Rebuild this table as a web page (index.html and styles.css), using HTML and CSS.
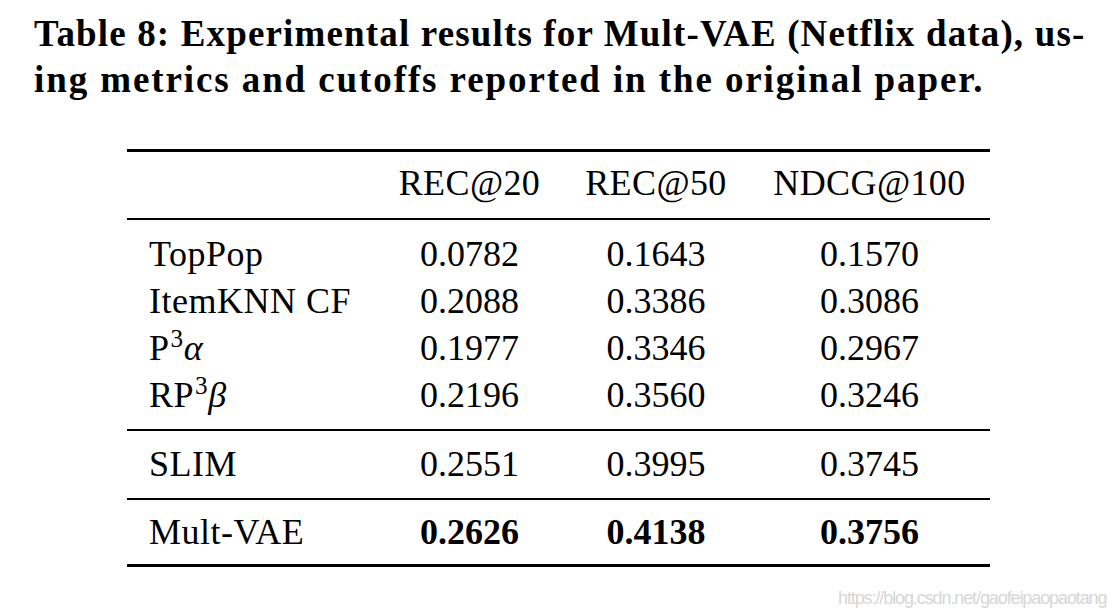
FILE: index.html
```html
<!DOCTYPE html>
<html>
<head>
<meta charset="utf-8">
<link rel="stylesheet" href="styles.css">
</head>
<body>
<div class="page">
  <h1 class="caption">Table 8: Experimental results for Mult-VAE (Netflix data), us-<br><span class="caption-cont">ing metrics and cutoffs reported in the original paper.</span></h1>
  <table class="results">
    <thead>
      <tr>
        <th class="name"></th>
        <th>REC@20</th>
        <th>REC@50</th>
        <th>NDCG@100</th>
      </tr>
    </thead>
    <tbody>
      <tr class="first">
        <td class="name">TopPop</td><td>0.0782</td><td>0.1643</td><td>0.1570</td>
      </tr>
      <tr>
        <td class="name">ItemKNN CF</td><td>0.2088</td><td>0.3386</td><td>0.3086</td>
      </tr>
      <tr>
        <td class="name">P<sup>3</sup><i>α</i></td><td>0.1977</td><td>0.3346</td><td>0.2967</td>
      </tr>
      <tr class="last">
        <td class="name">RP<sup>3</sup><i>β</i></td><td>0.2196</td><td>0.3560</td><td>0.3246</td>
      </tr>
    </tbody>
    <tbody>
      <tr class="single">
        <td class="name">SLIM</td><td>0.2551</td><td>0.3995</td><td>0.3745</td>
      </tr>
    </tbody>
    <tbody>
      <tr class="single final">
        <td class="name">Mult-VAE</td><td class="best">0.2626</td><td class="best">0.4138</td><td class="best">0.3756</td>
      </tr>
    </tbody>
  </table>
  <div class="watermark">https://blog.csdn.net/gaofeipaopaotang</div>
</div>
</body>
</html>
```
FILE: styles.css
```css
html, body {
  margin: 0;
  padding: 0;
  background: #ffffff;
}

.page {
  position: relative;
  width: 1118px;
  height: 616px;
  overflow: hidden;
  font-family: "Liberation Serif", "DejaVu Serif", serif;
  color: #000;
}

.caption {
  margin: 11px 0 0 34px;
  font-size: 37px;
  line-height: 46px;
  font-weight: bold;
  letter-spacing: 1.15px;
  white-space: nowrap;
}

.caption-cont {
  letter-spacing: 1.9px;
}

.results {
  margin: 46px 0 0 127px;
  width: 863px;
  border-collapse: separate;
  border-spacing: 0;
  font-size: 36px;
  line-height: 47px;
  table-layout: fixed;
}

.results th,
.results td {
  padding: 0;
  font-weight: normal;
  text-align: center;
  white-space: nowrap;
}

.results th:nth-child(1) { width: 227px; }
.results th:nth-child(2) { width: 187px; }
.results th:nth-child(3) { width: 186px; }
.results th:nth-child(4) { width: 241px; }

.results .name {
  text-align: left;
  padding-left: 22px;
  letter-spacing: 0.5px;
}

.results thead th {
  border-top: 3px solid #000;
  border-bottom: 2px solid #000;
  padding-top: 8px;
  padding-bottom: 11px;
  letter-spacing: 0.4px;
}

.results tr.first td { padding-top: 11px; }
.results tr.last td {
  padding-bottom: 10px;
  border-bottom: 2px solid #000;
}

.results tr.single td {
  padding-top: 10px;
  padding-bottom: 10px;
  border-bottom: 2px solid #000;
}

.results tr.final td {
  padding-top: 9px;
  padding-bottom: 8px;
  border-bottom: 3px solid #000;
}

.results .best { font-weight: bold; }

.results sup {
  font-size: 0.7em;
  line-height: 0;
  vertical-align: 0.5em;
  margin-left: 1px;
}

.results i { font-style: italic; }

.watermark {
  position: absolute;
  left: 838px;
  top: 588px;
  font-family: "Liberation Sans", Arial, sans-serif;
  font-size: 18px;
  line-height: 20px;
  letter-spacing: -1.1px;
  color: #d6d6d6;
  white-space: nowrap;
}
```
